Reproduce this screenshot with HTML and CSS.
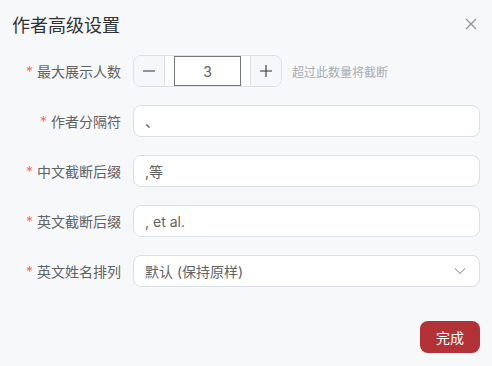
FILE: index.html
```html
<!DOCTYPE html>
<html lang="zh-CN">

<head>
    <meta charset="UTF-8">
    <title>作者高级设置</title>
    <link rel="stylesheet" href="styles.css">
</head>

<body>
    <div class="dialog">
        <div class="dialog-header">
            <h2>作者高级设置</h2>
            <span class="close-btn">
                <svg width="12" height="12" viewBox="0 0 12 12"><path d="M1 1L11 11M11 1L1 11" stroke="#909399" stroke-width="1.2" fill="none"/></svg>
            </span>
        </div>

        <div class="form">
            <div class="form-row">
                <label class="form-label required">最大展示人数</label>
                <div class="form-field">
                    <div class="stepper">
                        <span class="step-btn minus">
                            <svg width="12" height="12" viewBox="0 0 12 12"><path d="M0 6H12" stroke="#303133" stroke-width="1.1"/></svg>
                        </span>
                        <span class="step-value"><span class="value-box">3</span></span>
                        <span class="step-btn plus">
                            <svg width="12" height="12" viewBox="0 0 12 12"><path d="M0 6H12M6 0V12" stroke="#303133" stroke-width="1.1"/></svg>
                        </span>
                    </div>
                    <span class="hint">超过此数量将截断</span>
                </div>
            </div>

            <div class="form-row">
                <label class="form-label required">作者分隔符</label>
                <div class="form-field">
                    <div class="text-input">、</div>
                </div>
            </div>

            <div class="form-row">
                <label class="form-label required">中文截断后缀</label>
                <div class="form-field">
                    <div class="text-input">,等</div>
                </div>
            </div>

            <div class="form-row">
                <label class="form-label required">英文截断后缀</label>
                <div class="form-field">
                    <div class="text-input">, et al.</div>
                </div>
            </div>

            <div class="form-row">
                <label class="form-label required">英文姓名排列</label>
                <div class="form-field">
                    <div class="text-input select">
                        <span>默认 (保持原样)</span>
                        <svg width="12" height="8" viewBox="0 0 12 8"><path d="M1 1.5L6 6.5L11 1.5" stroke="#a8abb2" stroke-width="1.1" fill="none"/></svg>
                    </div>
                </div>
            </div>
        </div>

        <div class="dialog-footer">
            <button class="primary-btn">完成</button>
        </div>
    </div>
</body>

</html>
```

FILE: styles.css
```css
* {
    box-sizing: border-box;
}

body {
    margin: 0;
    padding: 0;
    background-color: #f7f8fa;
    font-family: 'Inter', 'Noto Sans CJK SC', sans-serif;
    color: #606266;
}

.dialog {
    width: 492px;
    height: 366px;
    padding: 14px 12px 0 12px;
}

.dialog-header {
    display: flex;
    align-items: center;
    justify-content: space-between;
    height: 24px;
}

.dialog-header h2 {
    margin: 0;
    font-size: 18px;
    font-weight: 400;
    line-height: 24px;
    color: #303133;
}

.close-btn {
    display: flex;
    margin-right: 3px;
    margin-top: -5px;
}

.form {
    margin-top: 17px;
}

.form-row {
    display: flex;
    align-items: center;
    height: 32px;
    margin-bottom: 18px;
}

.form-row:last-child {
    margin-bottom: 0;
}

.form-label {
    width: 109px;
    text-align: right;
    font-size: 14px;
    color: #606266;
    flex-shrink: 0;
    margin-right: 12px;
}

.form-label.required::before {
    content: '*';
    color: #f56c6c;
    margin-right: 4px;
}

.form-field {
    flex: 1;
    display: flex;
    align-items: center;
}

.stepper {
    display: flex;
    width: 149px;
    height: 32px;
    border: 1px solid #dcdfe6;
    border-radius: 8px;
    background-color: white;
    overflow: hidden;
}

.step-btn {
    width: 31px;
    display: flex;
    align-items: center;
    justify-content: center;
    background-color: #f5f7fa;
}

.step-btn.minus {
    border-right: 1px solid #dcdfe6;
}

.step-btn.plus {
    border-left: 1px solid #dcdfe6;
}

.step-value {
    flex: 1;
    display: flex;
    align-items: center;
    justify-content: center;
}

.value-box {
    width: 67px;
    height: 30px;
    border: 1px solid #767676;
    display: flex;
    align-items: center;
    justify-content: center;
    font-size: 14px;
    color: #606266;
}

.hint {
    margin-left: 10px;
    font-size: 12px;
    color: #a8abb2;
}

.text-input {
    width: 100%;
    height: 32px;
    border: 1px solid #dcdfe6;
    border-radius: 8px;
    background-color: white;
    padding: 0 11px;
    display: flex;
    align-items: center;
    font-size: 14px;
    color: #606266;
}

.text-input.select {
    justify-content: space-between;
}

.text-input.select svg {
    margin-right: 2px;
}

.dialog-footer {
    display: flex;
    justify-content: flex-end;
    margin-top: 34px;
}

.primary-btn {
    width: 60px;
    height: 32px;
    border: none;
    border-radius: 8px;
    background-color: #b23236;
    color: white;
    font-family: 'Inter', 'Noto Sans CJK SC', sans-serif;
    font-size: 14px;
    cursor: pointer;
}
```
